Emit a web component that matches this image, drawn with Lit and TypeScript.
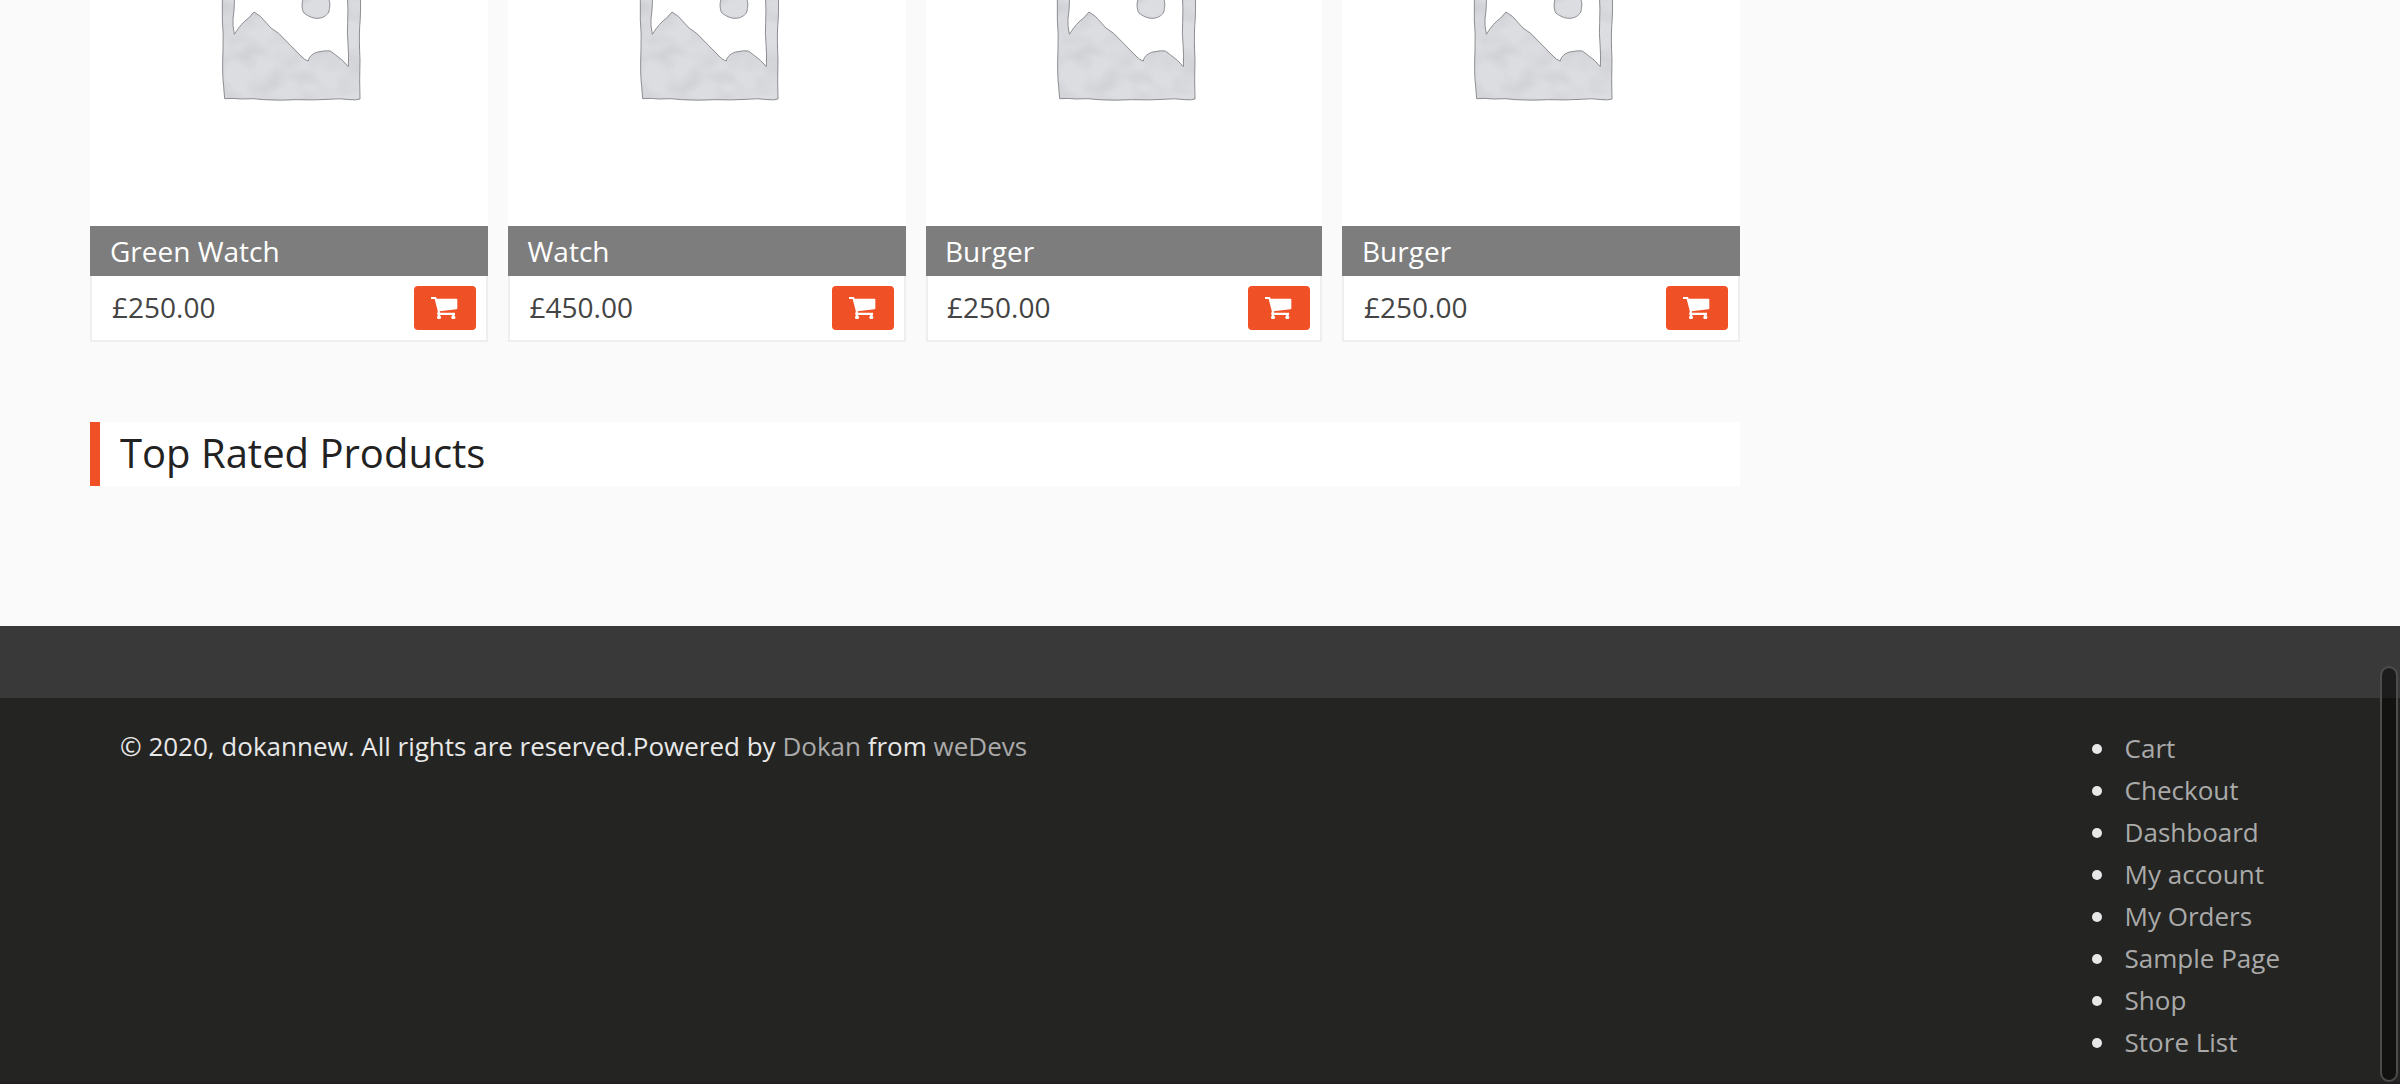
import { LitElement, html, css, svg } from "lit";
import { customElement, property } from "lit/decorators.js";

const frame =
  "M67 -20V60Q71 100 69 150Q66 220 71 260L74 296Q100 294 125 297Q160 294 190 299Q240 302 290 299Q340 301 385 298Q420 294 450 299Q468 301 480 297Q478 240 480 180Q477 120 479 80Q483 40 481 -20Z" +
  "M103 -20Q104 30 99 55Q97 75 103 103Q125 68 146 54L162 36L181 49L213 84L236 100L306 171Q314 180 325 183C326 170 342 156 360 155Q376 151 391 153L407 165Q429 180 445 200Q447 170 444 130Q441 100 443 70Q445 30 442 -20Z";
const sun =
  "M312 -10C305 3 305 22 309 34C312 42 320 45 330 50C342 56 360 57 372 50C384 43 388 36 388 26C392 10 387 -5 381 -12Z";

const placeholder = html`<svg viewBox="0 0 1194 678" aria-hidden="true">
  <defs>
    <filter id="wash" x="0" y="0" width="100%" height="100%" color-interpolation-filters="sRGB">
      <feTurbulence type="fractalNoise" baseFrequency="0.012 0.016" numOctaves="2" seed="8" />
      <feColorMatrix values="0 0 0 0 .79  0 0 0 0 .795  0 0 0 0 .815  1.7 0 0 0 -.65" />
      <feComposite in2="SourceGraphic" operator="in" result="n" />
      <feMerge><feMergeNode in="SourceGraphic" /><feMergeNode in="n" /></feMerge>
    </filter>
  </defs>
  <g transform="translate(330 0)">
    <g fill="#dcdde1" fill-rule="evenodd" filter="url(#wash)"><path d=${frame} /><path d=${sun} /></g>
    <g fill="none" stroke="#85868b" stroke-width="2.8" stroke-linejoin="round"><path d=${frame} /><path d=${sun} /></g>
  </g>
</svg>`;

const cart = svg`
  <path d="M0 0H14.5L17.5 5H77Q79 5 79 8V34Q79 36.500 76 37L26 43L27 47H72V54H21Q18 54 18.500 50L20.500 43L11 6H0Z" />
  <circle cx="24" cy="61" r="6" /><circle cx="67" cy="61" r="6" />
  <path d="M21 50H27V60H21ZM64 50H70V60H64Z" />`;

@customElement("product-card")
class ProductCard extends LitElement {
  @property() name = "";
  @property() price = "";

  static styles = css`
    :host { display: block; min-width: 0; }
    .thumb { height: 226px; background: #fff; overflow: hidden; }
    .thumb svg { display: block; width: 398px; height: 226px; margin-left: var(--thumb-shift, 0); }
    .title { height: 50px; box-sizing: border-box; padding: 0 var(--inset, 20px); background: #7d7d7d; color: #fff; font-size: 28px; line-height: 50px; }
    .foot { display: flex; justify-content: space-between; align-items: flex-start; height: 66px; box-sizing: border-box; padding: 10px 10px 0 var(--inset, 20px); border: 2px solid #eee; border-top: 0; background: #fff; }
    .price { font-size: 28px; line-height: 42px; color: #444; }
    .buy { display: flex; align-items: center; justify-content: center; width: 62px; height: 44px; padding: 0; border: 0; border-radius: 4px; background: #f05025; }
    .buy svg { width: 26.500px; height: 22.500px; margin-right: 1px; fill: #fff; }
  `;

  render() {
    return html`
      <div class="thumb">${placeholder}</div>
      <div class="title">${this.name}</div>
      <div class="foot">
        <span class="price">${this.price}</span>
        <button class="buy" aria-label="Add to cart"><svg viewBox="0 0 79.500 67.500">${cart}</svg></button>
      </div>`;
  }
}

@customElement("app-root")
class AppRoot extends LitElement {
  static styles = css`
    :host { display: block; position: relative; height: 1084px; overflow: hidden; background: #fafafa; font-family: "Open Sans", "Noto Sans", sans-serif; }
    .main { box-sizing: border-box; height: 626px; width: 1740px; padding-left: 90px; }
    .products { display: grid; grid-template-columns: 398px 398px 396px 398px; gap: 20px; }
    product-card:nth-child(2) { --inset: 19.5px; }
    product-card:nth-child(3) { --inset: 19px; --thumb-shift: -1px; }
    .heading { box-sizing: border-box; height: 64px; margin: 80px 0 0; padding-left: 20px; border-left: 10px solid #f05025; background: #fff; color: #222; font-size: 40px; font-weight: 400; line-height: 61px; }
    .widgets { height: 72px; background: #393939; }
    .bottom { display: flex; justify-content: space-between; box-sizing: border-box; height: 384px; padding: 27px 120px 0; background: #242422; color: #e8e8e8; font-size: 26px; line-height: 42px; }
    .links { margin: 2px 0 0; padding: 0; list-style: none; }
    .links li { display: flex; align-items: center; gap: 23px; }
    .links li::before { content: ""; width: 10px; height: 10px; margin-top: 2px; border-radius: 50%; background: #e8e8e8; }
    .link { color: #aaa; text-decoration: none; }
    .edge { height: 2px; background: #231c20; }
    .scrollbar { position: absolute; right: 2px; top: 666px; box-sizing: border-box; width: 18px; height: 416px; border: 2px solid #4c4c4b; border-radius: 9px; background: rgba(0, 0, 0, 0.5); background-clip: padding-box; }
  `;

  private products = [
    { name: "Green Watch", price: "£250.00" },
    { name: "Watch", price: "£450.00" },
    { name: "Burger", price: "£250.00" },
    { name: "Burger", price: "£250.00" },
  ];
  private links = ["Cart", "Checkout", "Dashboard", "My account", "My Orders", "Sample Page", "Shop", "Store List"];

  render() {
    return html`
      <main class="main">
        <div class="products">
          ${this.products.map((p) => html`<product-card .name=${p.name} .price=${p.price}></product-card>`)}
        </div>
        <h2 class="heading">Top Rated Products</h2>
      </main>
      <footer>
        <div class="widgets"></div>
        <div class="bottom">
          <div>© 2020, dokannew. All rights are reserved.Powered by <a class="link">Dokan</a> from <a class="link">weDevs</a></div>
          <ul class="links">${this.links.map((l) => html`<li><a class="link">${l}</a></li>`)}</ul>
        </div>
        <div class="edge"></div>
      </footer>
      <div class="scrollbar"></div>`;
  }
}
